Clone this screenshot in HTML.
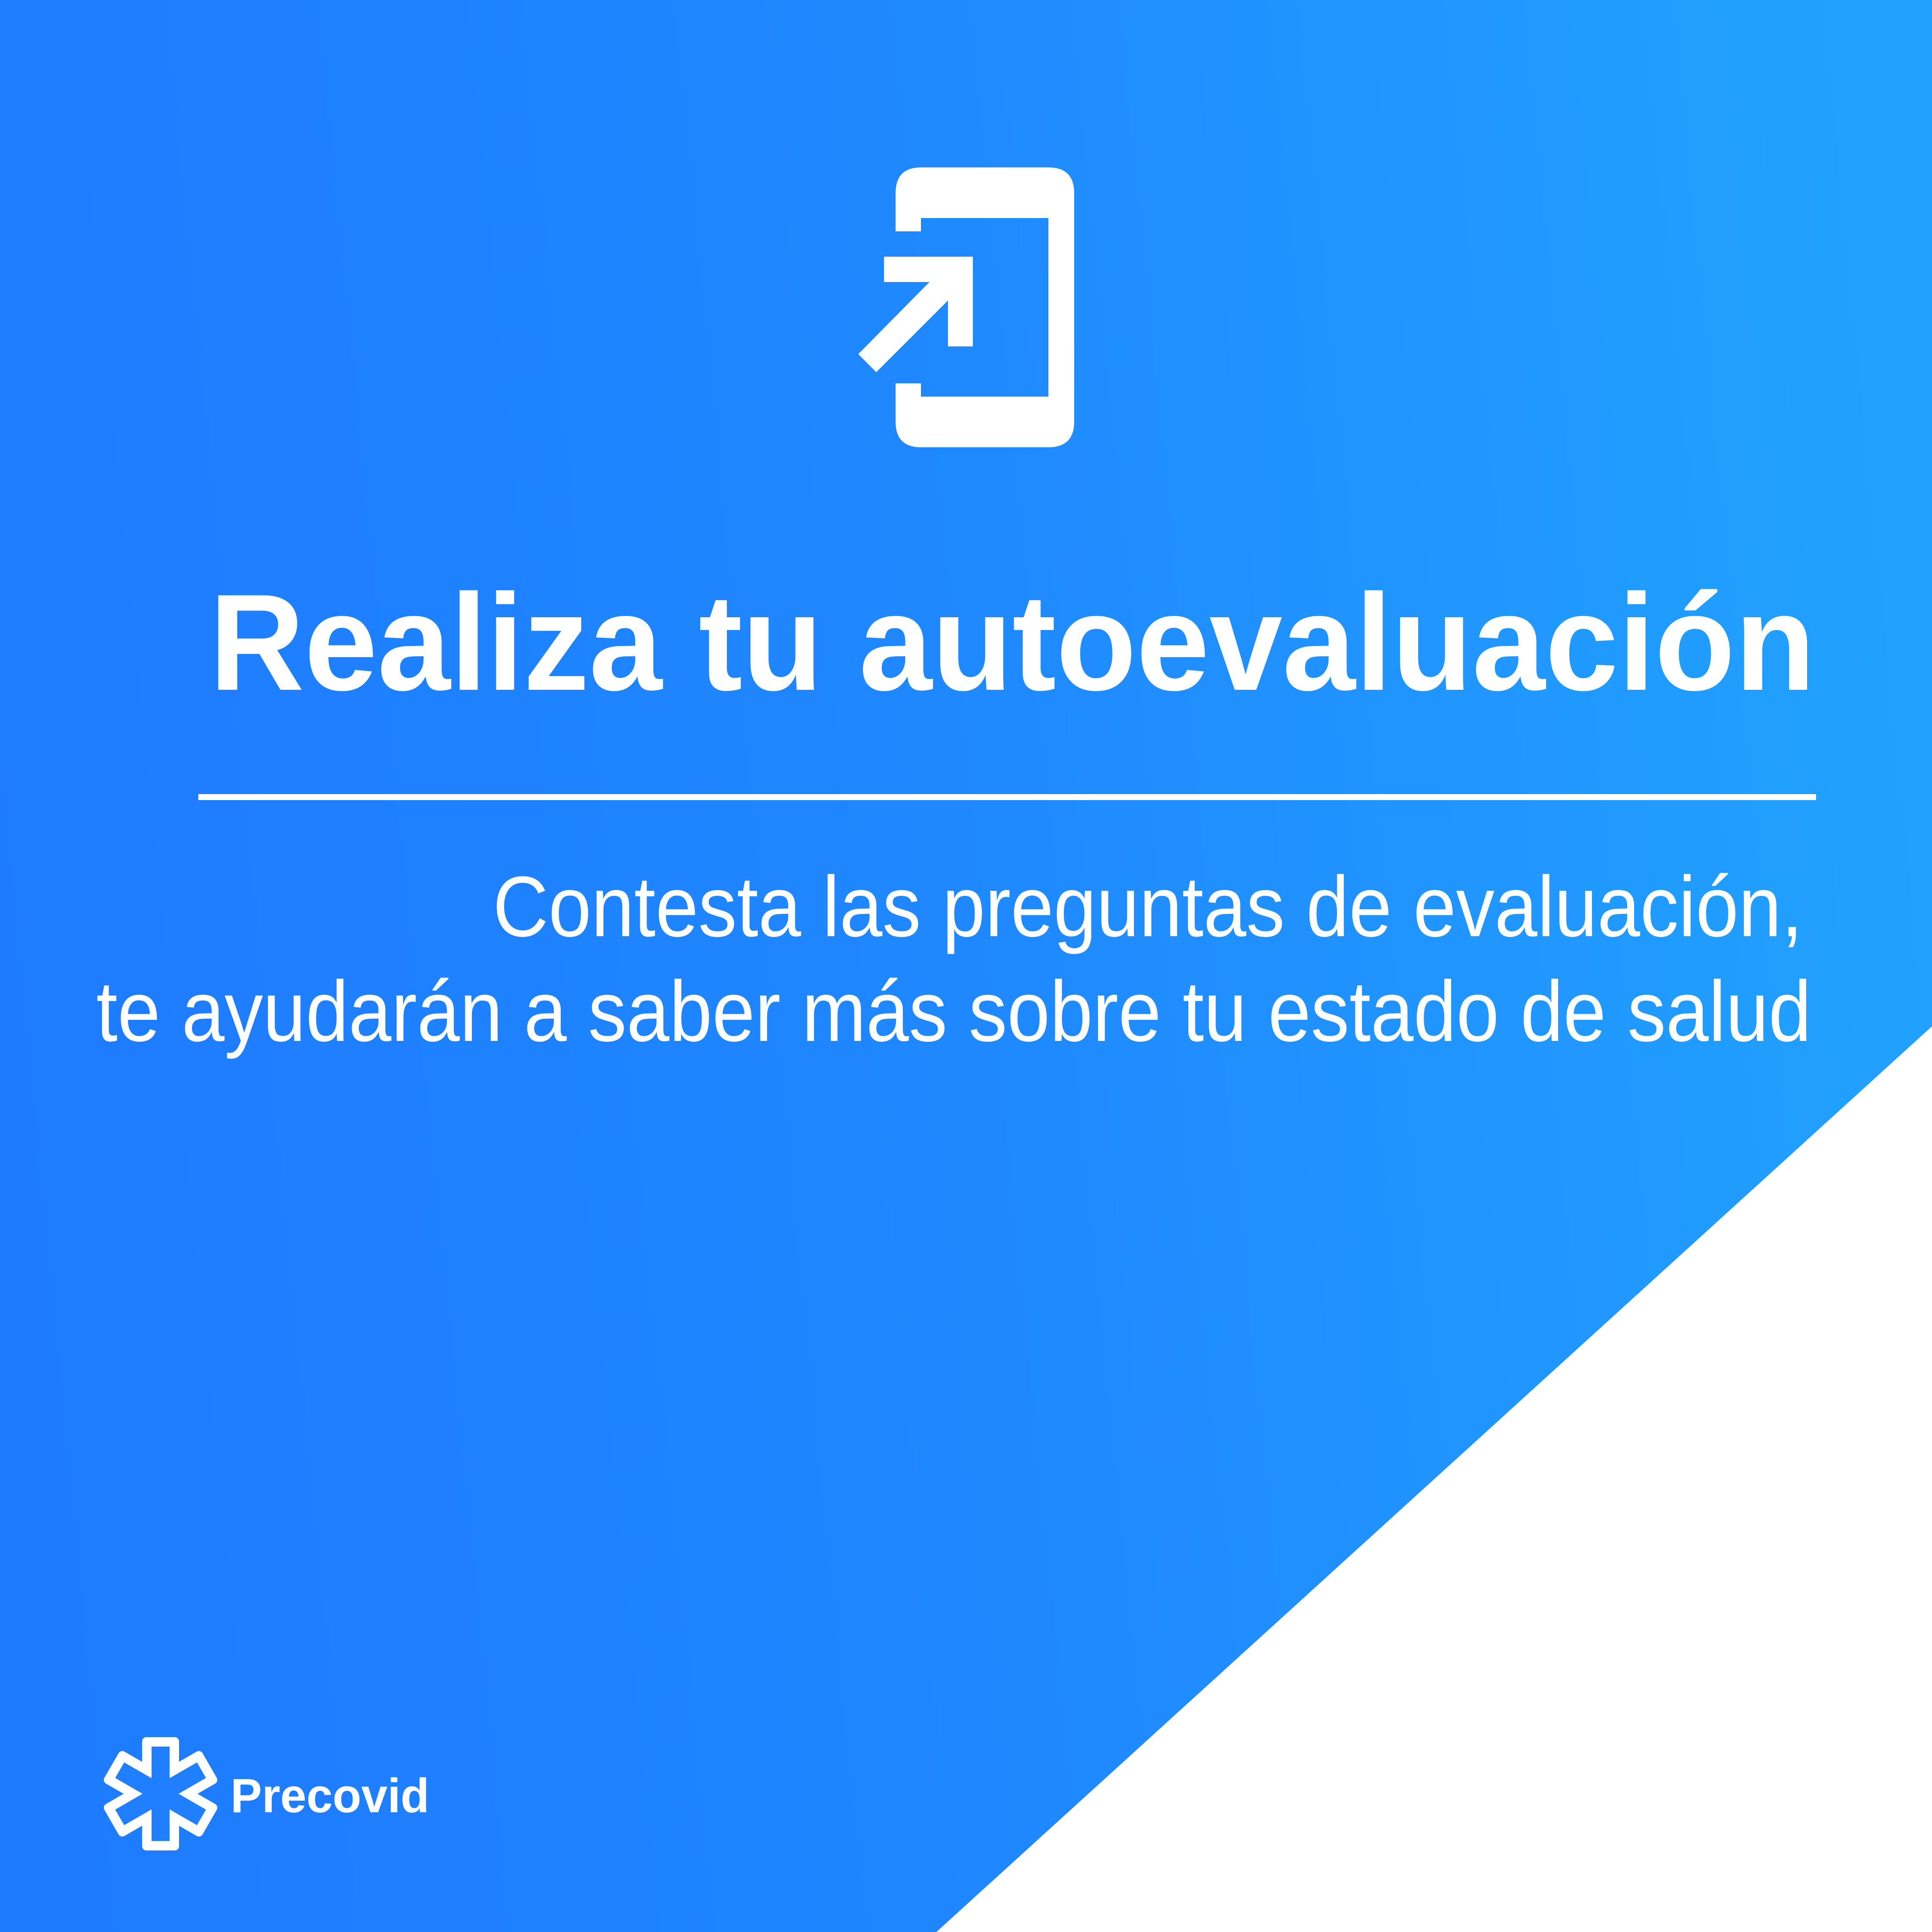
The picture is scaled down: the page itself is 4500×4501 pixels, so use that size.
<!DOCTYPE html>
<html><head><meta charset="utf-8"><style>
html,body{margin:0;padding:0;width:4500px;height:4501px;overflow:hidden;}
svg{display:block}
</style></head><body>
<svg width="4500" height="4501" viewBox="0 0 4500 4501" xmlns="http://www.w3.org/2000/svg">
<defs>
<linearGradient id="g" x1="0" y1="0.55" x2="1" y2="0.45">
<stop offset="0" stop-color="#1e7bff"/>
<stop offset="0.5" stop-color="#1f88ff"/>
<stop offset="1" stop-color="#21a2ff"/>
</linearGradient>
</defs>
<rect width="4500" height="4501" fill="url(#g)"/>
<polygon points="4500,2391 4500,4501 2181,4501" fill="#ffffff"/>
<path fill="#fff" fill-rule="evenodd" d="M2145,390 H2442 Q2502,390 2502,450 V982 Q2502,1042 2442,1042 H2145 Q2086,1042 2086,982 V893 H2145 V924 H2442 V508 H2145 V539 H2086 V450 Q2086,390 2145,390 Z"/>
<path fill="#fff" d="M2059,598 H2266 V807 H2208 V700 L2041,867 L1999,825 L2165,657 H2059 Z"/>
<text x="488" y="1607" textLength="3740" lengthAdjust="spacingAndGlyphs" font-family="Liberation Sans, sans-serif" font-weight="bold" font-size="320" fill="#fff">Realiza tu autoevaluación</text>
<rect x="462" y="1850" width="3768" height="14" fill="#fff"/>
<text x="1148" y="2181" textLength="3051" lengthAdjust="spacingAndGlyphs" font-family="Liberation Sans, sans-serif" font-size="200" fill="#fff">Contesta las preguntas de evaluación,</text>
<text x="224" y="2425" textLength="3995" lengthAdjust="spacingAndGlyphs" font-family="Liberation Sans, sans-serif" font-size="200" fill="#fff">te ayudarán a saber más sobre tu estado de salud</text>
<g transform="translate(374,4179)">
<g fill="#fff">
<rect x="-43" y="-132" width="86" height="264" rx="10"/>
<rect x="-43" y="-132" width="86" height="264" rx="10" transform="rotate(60)"/>
<rect x="-43" y="-132" width="86" height="264" rx="10" transform="rotate(120)"/>
</g>
<g fill="#1f7fff">
<rect x="-21" y="-110" width="42" height="220"/>
<rect x="-21" y="-110" width="42" height="220" transform="rotate(60)"/>
<rect x="-21" y="-110" width="42" height="220" transform="rotate(120)"/>
</g>
</g>
<text x="537" y="4222" textLength="463" lengthAdjust="spacingAndGlyphs" font-family="Liberation Sans, sans-serif" font-weight="bold" font-size="112" fill="#fff">Precovid</text>
</svg>
</body></html>
